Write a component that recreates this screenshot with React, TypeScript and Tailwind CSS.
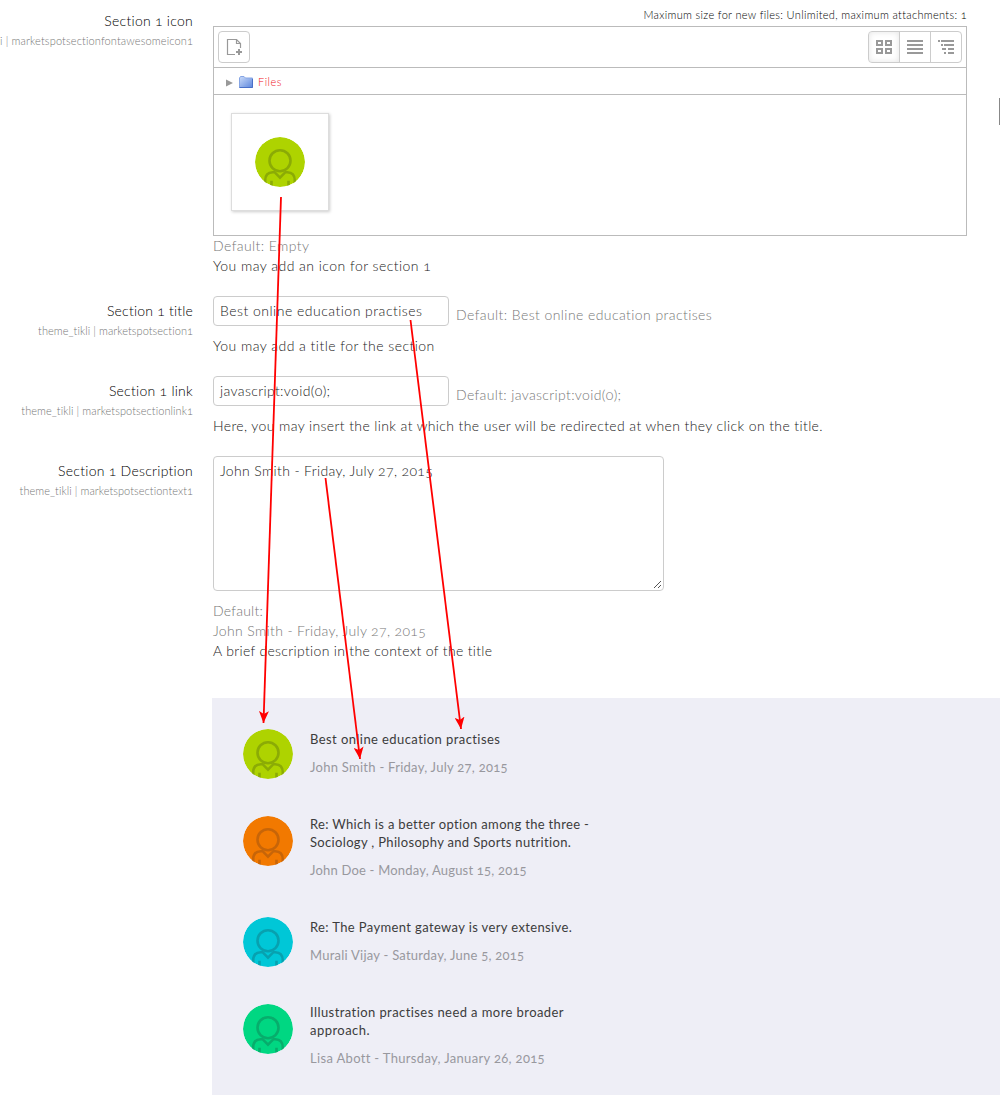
import type { ReactNode } from "react";

function Avatar({ fill, stroke }: { fill: string; stroke: string }) {
  return (
    <svg width="50" height="50" viewBox="0 0 50 50" className="block shrink-0 overflow-hidden rounded-full">
      <circle cx="25" cy="25" r="25" fill={fill} />
      <g fill="none" stroke={stroke} strokeWidth="2.6">
        <circle cx="25" cy="23.7" r="10.5" />
        <path d="M10.2 50V43.5Q10.2 35.4 17.8 35.2H19.6L25 40.6L30.4 35.2H32.2Q39.8 35.4 39.8 43.5V50" />
        <path d="M16.5 43.8V50M33.5 43.8V50" />
      </g>
    </svg>
  );
}

function Label({ title, titleClass, path, pathClass }: { title: string; titleClass: string; path: string; pathClass: string }) {
  return (
    <div className="flex w-[193px] shrink-0 flex-col items-end overflow-hidden whitespace-nowrap pt-[5px]">
      <span className={`text-black ${titleClass}`}>{title}</span>
      <span className={`text-[11px] text-[#777] ${pathClass}`}>{path}</span>
    </div>
  );
}

function Setting({ label, height, children }: { label: ReactNode; height: string; children: ReactNode }) {
  return (
    <section className={`flex gap-5 ${height}`}>
      {label}
      <div className="w-[754px] shrink-0 whitespace-nowrap text-[#222]">{children}</div>
    </section>
  );
}

function Toolbar() {
  return (
    <div className="flex h-[41px] items-center justify-between border-b border-[#bbb] px-1">
      <button className="flex h-8 w-8 items-center justify-center rounded-[4px] border border-[#ccc]">
        <svg width="16" height="18" viewBox="0 0 16 18" fill="none" stroke="#999">
          <path d="M9 16.5H1.5V1.5H10.5L14.5 5.5V10" strokeWidth="1.2" />
          <path d="M10.5 1.5V5.5H14.5" strokeWidth="1.2" />
          <path d="M13 11V17M10 14H16" strokeWidth="2" />
        </svg>
      </button>
      <div className="flex h-8 w-[94px] overflow-hidden rounded-[4px] border border-[#ccc]">
        <button className="flex flex-1 items-center justify-center border-r border-[#ccc] shadow-[inset_0_0_6px_#e4e4e4]">
          <svg width="16" height="14" viewBox="0 0 16 14" fill="none" stroke="#999" strokeWidth="2">
            <path d="M1 1H6V5H1ZM10 1H15V5H10ZM1 9H6V13H1ZM10 9H15V13H10Z" />
          </svg>
        </button>
        <button className="flex flex-1 items-center justify-center border-r border-[#ccc]">
          <svg width="16" height="14" viewBox="0 0 16 14" stroke="#999" strokeWidth="2">
            <path d="M0 1H16M0 5H16M0 9H16M0 13H16" />
          </svg>
        </button>
        <button className="flex flex-1 items-center justify-center">
          <svg width="16" height="14" viewBox="0 0 16 14" stroke="#999" strokeWidth="2">
            <path d="M0 1H2M3 1H16M3 5H5M6 5H16M4 9H8M10 9H16M6 13H8M10 13H16" />
          </svg>
        </button>
      </div>
    </div>
  );
}

function FileManager() {
  return (
    <div className="h-[210px] border border-[#bbb]">
      <Toolbar />
      <div className="flex h-[27px] items-center border-b border-[#bbb] pt-px pl-3">
        <svg width="7" height="8" viewBox="0 0 7 8" className="mt-0.5">
          <path d="M0 0.5L7 4L0 7.5Z" fill="#999" />
        </svg>
        <svg width="14" height="12" viewBox="0 0 14 12" className="ml-1.5">
          <defs>
            <linearGradient id="folder" x1="0" y1="0" x2="1" y2="1">
              <stop offset="0" stopColor="#cbdcfa" />
              <stop offset="1" stopColor="#5c86dc" />
            </linearGradient>
          </defs>
          <path d="M.5 11.5V2L1.5.5H5L6.5 2H13.5V11.5Z" fill="url(#folder)" stroke="#86a5e4" />
          <path d="M.5 11.5H13.5V3" fill="none" stroke="#4870c8" />
        </svg>
        <span className="mt-px ml-[5px] text-[11px] tracking-[0.5px] text-[#f0101c]">Files</span>
      </div>
      <div className="pt-[18px] pl-[17px]">
        <div className="flex h-[98px] w-[98px] items-center justify-center border border-[#ddd] shadow-[1px_1px_3px_#ccc]">
          <Avatar fill="#aed300" stroke="#8bab05" />
        </div>
      </div>
    </div>
  );
}

function Field({ value, valueClass, fallback, fallbackClass }: { value: string; valueClass: string; fallback: string; fallbackClass: string }) {
  return (
    <div className="mb-2.5 flex h-[30px]">
      <div className="w-[236px] rounded-[4px] border border-[#ccc] px-1.5 leading-7">
        <span className={valueClass}>{value}</span>
      </div>
      <span className={`ml-[7px] pt-[9px] text-[#777] ${fallbackClass}`}>{fallback}</span>
    </div>
  );
}

type Post = { lines: { text: string; spacing: string }[]; meta: string; metaSpacing: string; fill: string; stroke: string };

const posts: Post[] = [
  {
    lines: [{ text: "Best online education practises", spacing: "tracking-[0.42px]" }],
    meta: "John Smith - Friday, July 27, 2015",
    metaSpacing: "tracking-[0.27px]",
    fill: "#aed300",
    stroke: "#8bab05",
  },
  {
    lines: [
      { text: "Re: Which is a better option among the three -", spacing: "tracking-[0.33px]" },
      { text: "Sociology , Philosophy and Sports nutrition.", spacing: "tracking-[0.33px]" },
    ],
    meta: "John Doe - Monday, August 15, 2015",
    metaSpacing: "tracking-[0.2px]",
    fill: "#f27900",
    stroke: "#c76508",
  },
  {
    lines: [{ text: "Re: The Payment gateway is very extensive.", spacing: "tracking-[0.37px]" }],
    meta: "Murali Vijay - Saturday, June 5, 2015",
    metaSpacing: "tracking-[0.24px]",
    fill: "#00c7d7",
    stroke: "#07a1af",
  },
  {
    lines: [
      { text: "Illustration practises need a more broader", spacing: "tracking-[0.42px]" },
      { text: "approach.", spacing: "tracking-[0.46px]" },
    ],
    meta: "Lisa Abott - Thursday, January 26, 2015",
    metaSpacing: "tracking-[0.33px]",
    fill: "#00d782",
    stroke: "#07ad6c",
  },
];

function PostItem({ post }: { post: Post }) {
  return (
    <li className="flex gap-[17px] whitespace-nowrap text-[13px] leading-[18px]">
      <Avatar fill={post.fill} stroke={post.stroke} />
      <div className="-mt-px mb-px self-center">
        {post.lines.map((line) => (
          <p key={line.text} className={`font-normal text-[#3c3c3c] ${line.spacing}`}>{line.text}</p>
        ))}
        <p className={`mt-2.5 font-normal text-[#98989e] ${post.metaSpacing}`}>{post.meta}</p>
      </div>
    </li>
  );
}

function Arrows() {
  return (
    <svg width="1000" height="1095" viewBox="0 0 1000 1095" className="pointer-events-none absolute top-0 left-0">
      <defs>
        <marker id="head" viewBox="0 0 12 10" refX="12" refY="5" markerWidth="12" markerHeight="10" markerUnits="userSpaceOnUse" orient="auto">
          <path d="M0 0L12 5L0 10L3 5Z" fill="#f00" />
        </marker>
      </defs>
      <g stroke="#f00" strokeWidth="1.8">
        <path d="M281 197L263.5 723" markerEnd="url(#head)" />
        <path d="M325.5 478L360 759" markerEnd="url(#head)" />
        <path d="M410.5 320L461 729" markerEnd="url(#head)" />
      </g>
    </svg>
  );
}

export default function App() {
  return (
    <main className="relative h-[1095px] w-[1000px] overflow-hidden bg-white font-['Lato',sans-serif] text-[14px] leading-5 font-light oldstyle-nums">
      <div className="pt-1.5">
        <Setting
          height="h-[290px]"
          label={<Label title="Section 1 icon" titleClass="tracking-[0.26px]" path="theme_tikli | marketspotsectionfontawesomeicon1" pathClass="tracking-[0.14px]" />}
        >
          <p className="-mt-px mb-px text-right text-[11px] tracking-[0.33px] text-black">Maximum size for new files: Unlimited, maximum attachments: 1</p>
          <FileManager />
          <p className="tracking-[0.42px] text-[#777]">Default: Empty</p>
          <p className="tracking-[0.46px]">You may add an icon for section 1</p>
        </Setting>
        <Setting
          height="h-20"
          label={<Label title="Section 1 title" titleClass="tracking-[0.2px]" path="theme_tikli | marketspotsection1" pathClass="tracking-[0.06px]" />}
        >
          <Field value="Best online education practises" valueClass="tracking-[0.49px]" fallback="Default: Best online education practises" fallbackClass="tracking-[0.42px]" />
          <p className="tracking-[0.46px]">You may add a title for the section</p>
        </Setting>
        <Setting
          height="h-20"
          label={<Label title="Section 1 link" titleClass="tracking-[0.26px]" path="theme_tikli | marketspotsectionlink1" pathClass="tracking-[0.07px]" />}
        >
          <Field value="javascript:void(0);" valueClass="tracking-[0.36px]" fallback="Default: javascript:void(0);" fallbackClass="tracking-[0.35px]" />
          <p className="tracking-[0.38px]">Here, you may insert the link at which the user will be redirected at when they click on the title.</p>
        </Setting>
        <Setting
          height="h-[242px]"
          label={<Label title="Section 1 Description" titleClass="tracking-[0.26px]" path="theme_tikli | marketspotsectiontext1" pathClass="tracking-[0.06px]" />}
        >
          <div className="mb-2.5 flex h-[135px] w-[451px] items-start justify-between rounded-[4px] border border-[#ccc] pt-1 pl-1.5">
            <span className="tracking-[0.35px]">John Smith - Friday, July 27, 2015</span>
            <svg width="9" height="9" viewBox="0 0 9 9" className="self-end" stroke="#555" strokeWidth="1">
              <path d="M0 7L7 0M4 7L7 4" />
            </svg>
          </div>
          <p className="tracking-[0.22px] text-[#777]">Default:</p>
          <p className="tracking-[0.35px] text-[#777]">John Smith - Friday, July 27, 2015</p>
          <p className="tracking-[0.32px]">A brief description in the context of the title</p>
        </Setting>
      </div>
      <ul className="ml-[212px] flex h-[397px] flex-col gap-[37px] bg-[#eeeef6] pt-[31px] pl-[31px]">
        {posts.map((post) => (
          <PostItem key={post.meta} post={post} />
        ))}
      </ul>
      <div className="absolute top-[98px] right-0 h-[27px] w-px bg-[#888]" />
      <Arrows />
    </main>
  );
}
